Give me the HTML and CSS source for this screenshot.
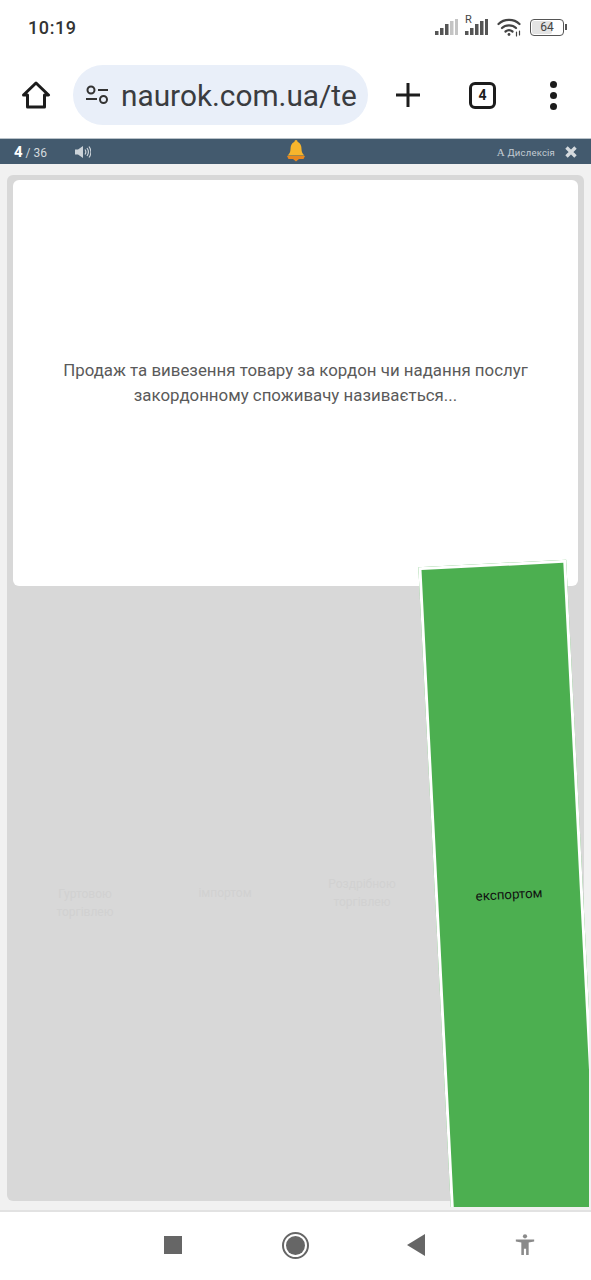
FILE: index.html
```html
<!DOCTYPE html>
<html lang="uk">
<head>
    <meta charset="UTF-8">
    <meta name="viewport" content="width=device-width, initial-scale=1.0">
    <title>Naurok</title>
    <link rel="stylesheet" href="styles.css">
</head>
<body>
    <div class="status-bar">
        <span class="time">10:19</span>
        <div class="status-icons">
            <svg class="signal" width="24" height="18" viewBox="0 0 24 18">
                <rect x="0" y="13" width="3.5" height="4" fill="#555"/>
                <rect x="5" y="10" width="3.5" height="7" fill="#555"/>
                <rect x="10" y="6" width="3.5" height="11" fill="#555"/>
                <rect x="15" y="3" width="3.5" height="14" fill="#c4c4c4"/>
                <rect x="20" y="1" width="3" height="16" fill="#c4c4c4"/>
            </svg>
            <div class="signal-r">
                <span class="roaming">R</span>
                <svg width="24" height="18" viewBox="0 0 24 18">
                    <rect x="0" y="13" width="3.5" height="4" fill="#555"/>
                    <rect x="5" y="10" width="3.5" height="7" fill="#555"/>
                    <rect x="10" y="6" width="3.5" height="11" fill="#555"/>
                    <rect x="15" y="3" width="3.5" height="14" fill="#555"/>
                    <rect x="20" y="1" width="3" height="16" fill="#555"/>
                </svg>
            </div>
            <svg class="wifi" width="24" height="20" viewBox="0 0 24 20" fill="none" stroke="#444" stroke-width="2.2" stroke-linecap="round">
                <path d="M1.5 7C7 1.5 17 1.5 22.500 7"/>
                <path d="M5 11C8.500 7.500 15.500 7.500 19 11"/>
                <path d="M8.500 14.500C10.500 13 13.500 13 15.500 14.500"/>
                <circle cx="12" cy="17.500" r="1.400" fill="#444" stroke="none"/>
                <path d="M19.500 15v4M22.500 14v4" stroke-width="1.200"/>
            </svg>
            <div class="battery">
                <div class="battery-body">
                    <span class="battery-fill"></span>
                    <span class="battery-num">64</span>
                </div>
                <span class="battery-tip"></span>
            </div>
        </div>
    </div>

    <div class="toolbar">
        <svg class="home-icon" width="30" height="28" viewBox="0 0 30 28" fill="none" stroke="#1c1c1c" stroke-width="3" stroke-linejoin="round">
            <path d="M2.500 14L15 2l12.500 12h-4v12H6.500V14z"/>
        </svg>
        <div class="url-pill">
            <svg class="tune-icon" width="24" height="20" viewBox="0 0 24 20" fill="none" stroke="#333" stroke-width="2">
                <circle cx="6" cy="5" r="3.500"/>
                <path d="M13 5h10M1 14h11"/>
                <circle cx="18.500" cy="14.500" r="3.500"/>
            </svg>
            <span class="url-text">naurok.com.ua/te</span>
        </div>
        <svg class="plus-icon" width="26" height="26" viewBox="0 0 26 26" stroke="#1c1c1c" stroke-width="3">
            <path d="M13 1v24M1 13h24"/>
        </svg>
        <div class="tab-count">4</div>
        <div class="menu-dots"><i></i><i></i><i></i></div>
    </div>

    <div class="quiz-bar">
        <div class="quiz-left">
            <span class="counter"><b>4</b> / 36</span>
            <svg class="sound-icon" width="16" height="14" viewBox="0 0 16 14" fill="none" stroke="#ccd3d9" stroke-width="1.200">
                <path d="M0 4.500h3L8 1v12L3 9.500H0z" fill="#ccd3d9" stroke="none"/>
                <path d="M10 4.500c1 1.500 1 3.500 0 5M12 3c1.800 2.500 1.800 5.500 0 8M14 1.500c2.500 3.500 2.500 7.500 0 11"/>
            </svg>
        </div>
        <svg class="bell-icon" width="18" height="22" viewBox="0 0 18 22">
            <path d="M9 0c1 0 1.500.8 1.500 1.800C13.500 3 14.500 6 14.500 9c0 3 1 5 3 6.500H.5c2-1.500 3-3.500 3-6.500 0-3 1-6 4-7.200C7.500.8 8 0 9 0z" fill="#f7b52c"/>
            <path d="M0 16h18l-1.500 3H12l-3 2.500L6 19H1.500z" fill="#e8871e"/>
        </svg>
        <div class="quiz-right">
            <span class="dyslexia"><span class="dyslexia-a">А</span> Дислексія</span>
            <svg class="close-icon" width="12" height="12" viewBox="0 0 12 12" stroke="#d5dade" stroke-width="3.400">
                <path d="M1.500 1.500l9 9M10.500 1.500l-9 9"/>
            </svg>
        </div>
    </div>

    <div class="stage">
        <div class="panel">
            <div class="question">
                <p>Продаж та вивезення товару за кордон чи надання послуг закордонному споживачу називається...</p>
            </div>
            <div class="options">
                <div class="option option-low">Гуртовою торгівлею</div>
                <div class="option">імпортом</div>
                <div class="option">Роздрібною торгівлею</div>
                <div class="option"></div>
            </div>
        </div>
        <div class="drag-clip">
            <div class="drag-card">експортом</div>
        </div>
    </div>

    <div class="nav-bar">
        <span class="nav-square"></span>
        <span class="nav-circle"><i></i></span>
        <span class="nav-back"></span>
        <svg class="nav-access" width="20" height="22" viewBox="0 0 20 24" fill="#8a8a8a">
            <circle cx="10" cy="2.500" r="2.300"/>
            <path d="M0 6h20v2.200l-6 1V23h-2.800v-7H8.800v7H6V9.200l-6-1z"/>
        </svg>
    </div>
</body>
</html>
```

FILE: styles.css
```css
* {
    box-sizing: border-box;
}
body {
    font-family: Roboto, "Noto Sans", sans-serif;
    margin: 0;
    width: 591px;
    height: 1280px;
    display: flex;
    flex-direction: column;
    background-color: #fff;
    overflow: hidden;
}

/* status bar */
.status-bar {
    height: 54px;
    display: flex;
    justify-content: space-between;
    align-items: center;
    padding: 0 24px 0 28px;
}
.time {
    font-size: 18px;
    font-weight: 500;
    letter-spacing: 0.6px;
    color: #333;
}
.status-icons {
    display: flex;
    align-items: center;
    gap: 6px;
}
.signal {
    margin-left: 2px;
}
.signal-r {
    position: relative;
    display: flex;
}
.roaming {
    position: absolute;
    left: 0;
    top: -5px;
    font-size: 11px;
    color: #444;
}
.wifi {
    margin-left: 2px;
}
.battery {
    display: flex;
    align-items: center;
    margin-left: 3px;
}
.battery-body {
    position: relative;
    width: 34px;
    height: 17px;
    border: 1.5px solid #555;
    border-radius: 4px;
    display: flex;
    justify-content: center;
    align-items: center;
}
.battery-fill {
    position: absolute;
    left: 1px;
    top: 1px;
    bottom: 1px;
    width: 20px;
    background-color: #e3e3e3;
    border-radius: 2px;
}
.battery-num {
    position: relative;
    font-size: 12px;
    color: #444;
}
.battery-tip {
    width: 2px;
    height: 6px;
    margin-left: 1px;
    background-color: #555;
}

/* browser toolbar */
.toolbar {
    height: 84px;
    display: flex;
    align-items: center;
    padding: 0 0 2px 21px;
}
.url-pill {
    width: 295px;
    height: 60px;
    margin-left: 22px;
    padding: 0 6px 0 12px;
    display: flex;
    align-items: center;
    gap: 12px;
    background-color: #e9eff9;
    border-radius: 30px;
}
.tune-icon {
    flex-shrink: 0;
}
.url-text {
    font-size: 29.800px;
    color: #3a3c40;
    white-space: nowrap;
}
.plus-icon {
    margin-left: 27px;
}
.tab-count {
    width: 27px;
    height: 27px;
    margin-left: 48px;
    border: 3px solid #1c1c1c;
    border-radius: 6px;
    display: flex;
    justify-content: center;
    align-items: center;
    font-size: 14px;
    font-weight: 700;
    color: #1c1c1c;
}
.menu-dots {
    margin-left: 54px;
    display: flex;
    flex-direction: column;
    gap: 4px;
}
.menu-dots i {
    width: 7px;
    height: 7px;
    border-radius: 50%;
    background-color: #1c1c1c;
}

/* quiz header */
.quiz-bar {
    position: relative;
    height: 26px;
    display: flex;
    justify-content: space-between;
    align-items: center;
    padding: 0 14px;
    background-color: #435a6e;
    border-top: 1px solid #b9c2c9;
}
.quiz-left,
.quiz-right {
    display: flex;
    align-items: center;
}
.counter {
    font-size: 12px;
    color: #d5dade;
}
.counter b {
    font-size: 15px;
    color: #fff;
}
.sound-icon {
    margin-left: 28px;
}
.bell-icon {
    position: absolute;
    left: 287px;
    top: 1px;
}
.dyslexia {
    font-size: 9.500px;
    letter-spacing: 0.2px;
    color: #c3ccd3;
}
.dyslexia-a {
    font-family: "Liberation Serif", serif;
    font-size: 11px;
}
.close-icon {
    margin-left: 10px;
}

/* quiz area */
.stage {
    position: relative;
    flex: 1;
    padding: 11px 7px 9px 7px;
    background-color: #f1f1f1;
}
.panel {
    height: 100%;
    padding: 5px 6px 0 6px;
    display: flex;
    flex-direction: column;
    background-color: #d8d8d8;
    border-radius: 6px;
}
.question {
    height: 406px;
    flex-shrink: 0;
    padding: 0 40px;
    display: flex;
    align-items: center;
    justify-content: center;
    background-color: #fff;
    border-radius: 6px;
}
.question p {
    margin: 0;
    font-size: 16.850px;
    line-height: 25px;
    color: #5a5a5a;
    text-align: center;
}
.options {
    flex: 1;
    margin: 0 -6px;
    display: grid;
    grid-template-columns: 156px 124px 150px 1fr;
}
.option {
    display: flex;
    align-items: center;
    justify-content: center;
    padding: 0 30px 2px;
    font-size: 12px;
    line-height: 18px;
    text-align: center;
    color: #d1d1d1;
}
.option-low {
    padding: 18px 30px 0;
}

/* dragged answer */
.drag-clip {
    position: absolute;
    top: 0;
    left: 0;
    right: 2px;
    bottom: 3px;
    overflow: hidden;
}
.drag-card {
    position: absolute;
    left: 435px;
    top: 399px;
    width: 148px;
    height: 662px;
    display: flex;
    align-items: center;
    justify-content: center;
    font-size: 13.300px;
    color: #111;
    background-color: #4caf50;
    border: 3px solid #fff;
    transform: rotate(-2.900deg);
}

/* android nav */
.nav-bar {
    position: relative;
    height: 70px;
    border-top: 2px solid #e2e2e2;
    flex-shrink: 0;
    display: flex;
    align-items: center;
    padding: 0 0 2px 164px;
}
.nav-square {
    width: 18px;
    height: 18px;
    background-color: #666;
}
.nav-circle {
    width: 27px;
    height: 27px;
    margin-left: 100px;
    padding: 2px;
    border: 2px solid #666;
    border-radius: 50%;
}
.nav-circle i {
    display: block;
    width: 100%;
    height: 100%;
    border-radius: 50%;
    background-color: #666;
}
.nav-back {
    margin-left: 98px;
    width: 0;
    height: 0;
    border-top: 11px solid transparent;
    border-bottom: 11px solid transparent;
    border-right: 18px solid #666;
}
.nav-access {
    margin-left: 90px;
}
```
